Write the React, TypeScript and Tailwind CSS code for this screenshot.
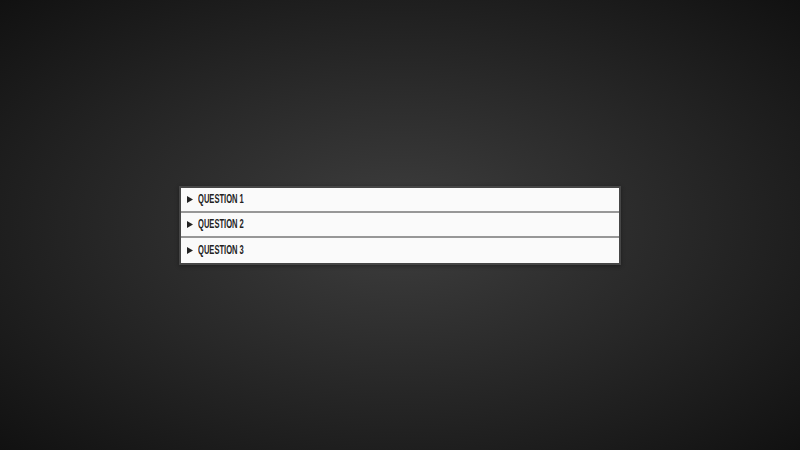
import React from "react";

const items = ["QUESTION 1", "QUESTION 2", "QUESTION 3"];

export default function App() {
  return (
    <div className="flex h-[450px] w-full items-center justify-center bg-[radial-gradient(ellipse_at_center,#3e3e3e_0%,#2a2a2a_45%,#111111_100%)]">
      <div className="flex w-[442px] flex-col border-2 border-[#464646] bg-[#fafafa] shadow-[0_1px_4px_rgba(0,0,0,0.35)]">
        {items.map((q, i) => (
          <div
            key={q}
            className={`flex h-[25px] items-center pl-[6px] ${i < 2 ? "border-b-2 border-[#979797]" : ""} ${i === 2 ? "h-[24px]" : ""}`}
          >
            <svg width="6" height="7" viewBox="0 0 6 7" className="mr-[5px] shrink-0">
              <path d="M0 0 L6 3.5 L0 7 Z" fill="#222" />
            </svg>
            <span
              className="inline-block origin-left scale-x-[0.56] text-[13.5px] font-bold leading-none text-[#222]"
              style={{ fontFamily: '"Liberation Sans", Arial, sans-serif' }}
            >
              {q}
            </span>
          </div>
        ))}
      </div>
    </div>
  );
}
